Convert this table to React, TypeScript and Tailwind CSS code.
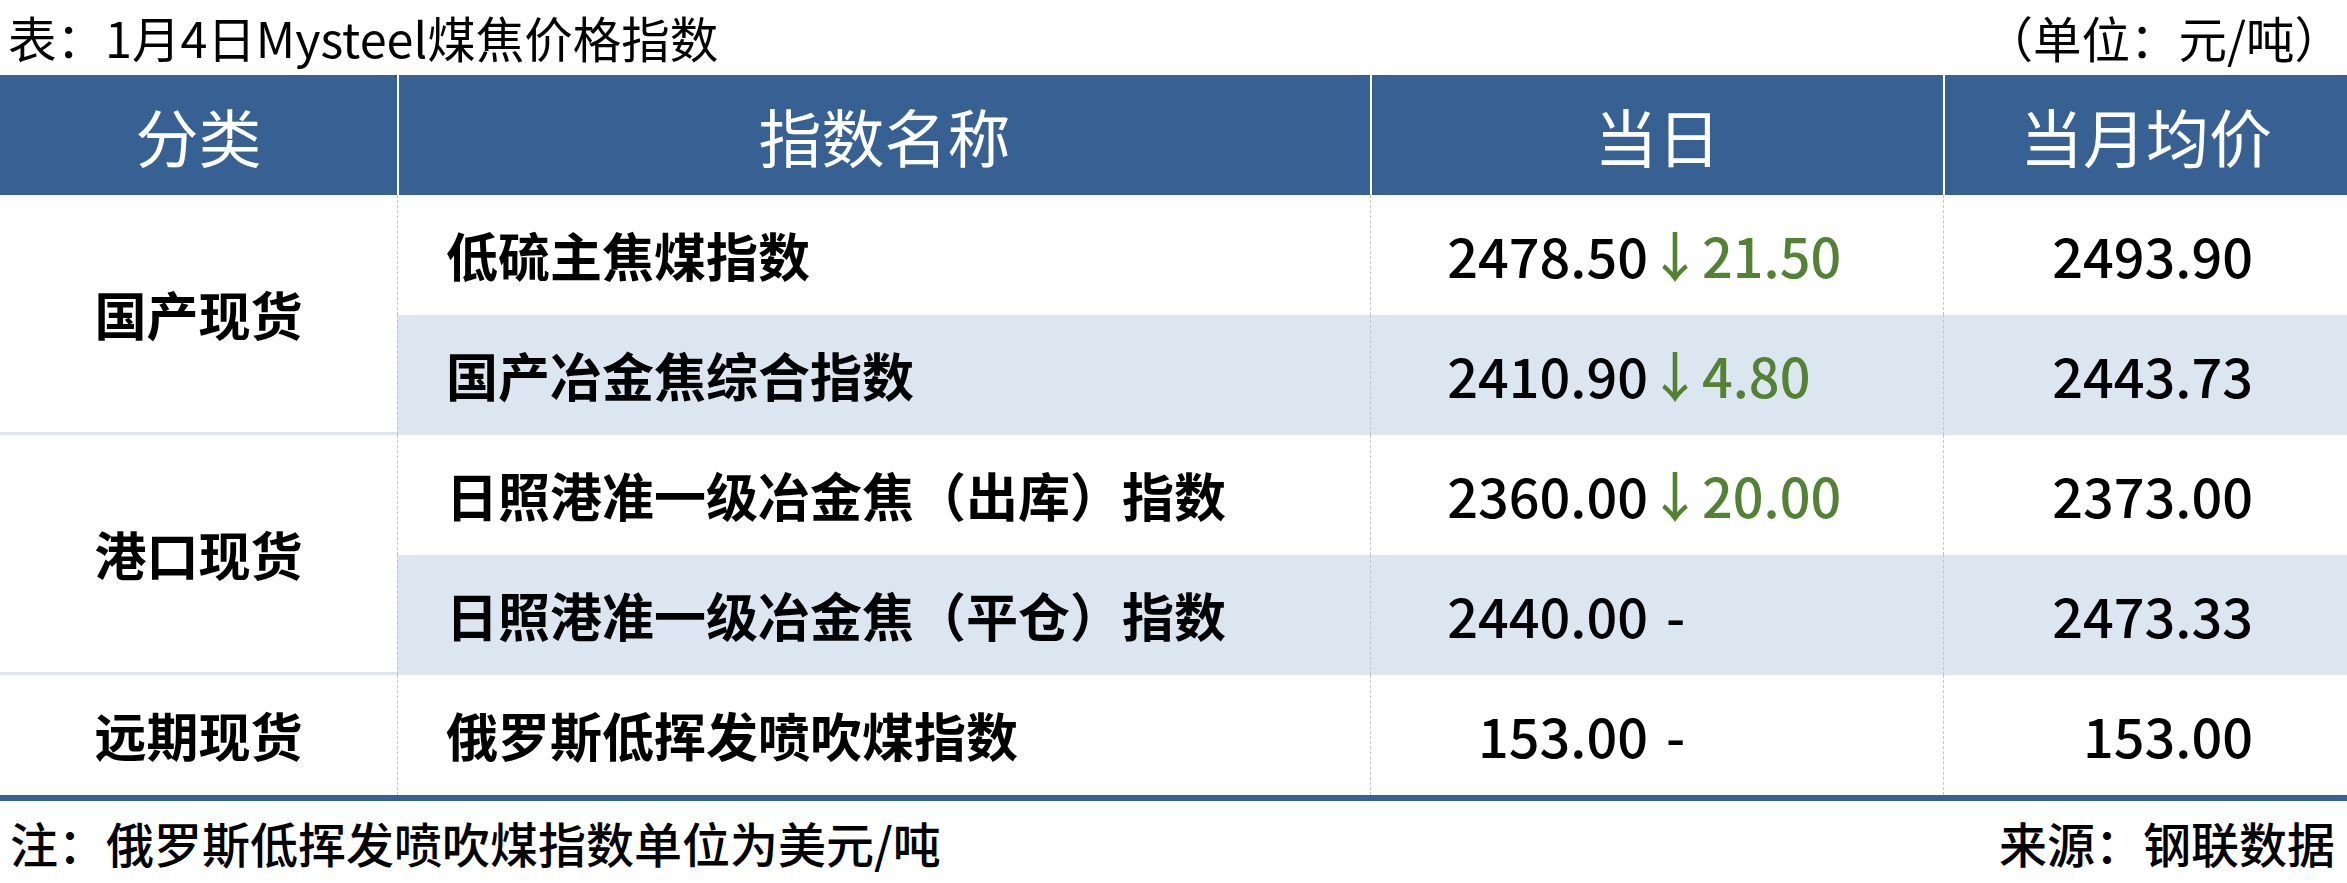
const rows = [
  { name: '低硫主焦煤指数', day: '2478.50', change: '21.50', avg: '2493.90', shade: false },
  { name: '国产冶金焦综合指数', day: '2410.90', change: '4.80', avg: '2443.73', shade: true },
  { name: '日照港准一级冶金焦（出库）指数', day: '2360.00', change: '20.00', avg: '2373.00', shade: false },
  { name: '日照港准一级冶金焦（平仓）指数', day: '2440.00', change: '', avg: '2473.33', shade: true },
  { name: '俄罗斯低挥发喷吹煤指数', day: '153.00', change: '', avg: '153.00', shade: false },
];

function Row({ r }: { r: (typeof rows)[number] }) {
  const bg = r.shade ? 'bg-[#dce6f1]' : 'bg-white';
  return (
    <>
      <div className={`${bg} flex items-center pl-[48px] border-l border-dashed border-[#c4c4c4]`}>{r.name}</div>
      <div className={`${bg} flex items-center border-l border-dashed border-[#c4c4c4] text-[54px] font-medium`}>
        <span className="inline-block w-[277px] text-right">{r.day}</span>
        {r.change ? (
          <span className="text-[#548235]">↓{r.change}</span>
        ) : (
          <span className="pl-[18px]">-</span>
        )}
      </div>
      <div className={`${bg} flex items-center justify-end pr-[94px] border-l border-dashed border-[#c4c4c4] text-[54px] font-medium`}>
        {r.avg}
      </div>
    </>
  );
}

export default function App() {
  return (
    <div className="w-[2347px] h-[883px] bg-white text-black font-['Noto_Sans_CJK_SC',sans-serif]">
      {/* title */}
      <div className="h-[75px] flex items-center justify-between pl-[8px] pr-[4px] text-[48.5px] leading-none">
        <span>表：1月4日Mysteel煤焦价格指数</span>
        <span>（单位：元/吨）</span>
      </div>

      {/* header */}
      <div className="grid grid-cols-[397px_973px_573px_404px] h-[120px] bg-[#386193] text-white text-[63px] font-normal">
        <div className="flex items-center justify-center">分类</div>
        <div className="flex items-center justify-center border-l-2 border-white">指数名称</div>
        <div className="flex items-center justify-center border-l-2 border-white">当日</div>
        <div className="flex items-center justify-center border-l-2 border-white">当月均价</div>
      </div>

      {/* body */}
      <div className="grid grid-cols-[397px_973px_573px_404px] grid-rows-[repeat(5,120px)] text-[52px] font-bold leading-none border-r border-[#d0d0d0]">
        <div className="row-span-2 flex items-center justify-center border-b-[3px] border-[#dce6f1]">国产现货</div>
        <Row r={rows[0]} />
        <Row r={rows[1]} />
        <div className="row-span-2 flex items-center justify-center border-b-[3px] border-[#dce6f1]">港口现货</div>
        <Row r={rows[2]} />
        <Row r={rows[3]} />
        <div className="flex items-center justify-center">远期现货</div>
        <Row r={rows[4]} />
      </div>

      <div className="h-[6px] bg-[#386193]" />

      {/* footer */}
      <div className="h-[82px] flex items-center justify-between pl-[10px] pr-[12px] text-[48px] font-medium leading-none">
        <span>注：俄罗斯低挥发喷吹煤指数单位为美元/吨</span>
        <span>来源：钢联数据</span>
      </div>
    </div>
  );
}
